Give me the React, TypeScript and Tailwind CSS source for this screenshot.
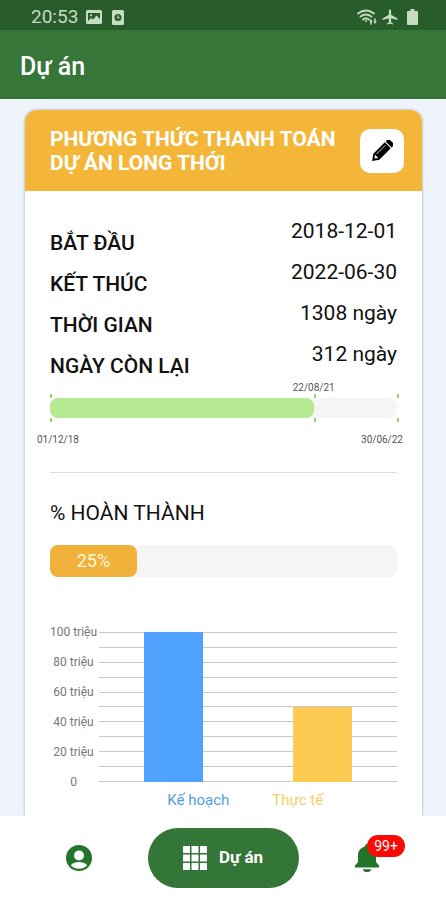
import React from "react";
import { MdAirplanemodeActive } from "react-icons/md";

const details = [
  { label: "BẮT ĐẦU", value: "2018-12-01" },
  { label: "KẾT THÚC", value: "2022-06-30" },
  { label: "THỜI GIAN", value: "1308 ngày" },
  { label: "NGÀY CÒN LẠI", value: "312 ngày" },
];

const axisLabels = [
  "100 triệu",
  "80 triệu",
  "60 triệu",
  "40 triệu",
  "20 triệu",
  "0",
];

const bars = [
  { name: "Kế hoạch", value: 100, color: "bg-[#50a2ff]" },
  { name: "Thực tế", value: 50, color: "bg-[#fdca52]" },
];

const GRID_LINES = 11;

function StatusBar() {
  return (
    <div className="flex h-[30px] items-center bg-[#285c2a] pt-1 pr-7 pl-[31px] text-[#c5dcc1]">
      <span className="text-[19px] leading-6">20:53</span>

      {/* Gallery */}
      <svg viewBox="0 0 16 14" className="ml-2 h-3.5 w-4">
        <rect width="16" height="14" rx="1.5" fill="currentColor" />
        <path d="M2 3h12v8H2z" fill="#285c2a" />
        <path d="M2 11l3-3 2 1.500L10.500 5.500 14 9v2z" fill="currentColor" />
        <circle cx="5" cy="5.300" r="1.100" fill="currentColor" />
      </svg>

      {/* Clock */}
      <svg viewBox="0 0 12 15" className="ml-2.5 h-[15px] w-3">
        <rect width="12" height="15" rx="1.5" fill="currentColor" />
        <circle cx="6" cy="7.500" r="3.500" fill="#285c2a" />
        <path
          d="M6 5.500v2.300h1.500"
          fill="none"
          stroke="currentColor"
          strokeWidth="1.200"
        />
      </svg>

      <div className="ml-auto flex items-center gap-1">
        {/* Wifi with traffic arrows */}
        <svg viewBox="0 0 20 16" className="h-4 w-5">
          <g
            fill="none"
            stroke="currentColor"
            strokeWidth="1.900"
            strokeLinecap="round"
          >
            <path d="M1 4.500Q9 -1.500 17 4.500" />
            <path d="M3.500 7.600Q9 3.300 14.500 7.600" />
            <path d="M6 10.500Q9 8 12 10.500" />
          </g>
          <path
            d="M7.500 11.300h3L9 13.400zM14 10l1.800 2.400h-1v3h-1.600v-3h-1zM18 15l-1.800-2.400h1v-3h1.600v3h1z"
            fill="currentColor"
          />
        </svg>
        <MdAirplanemodeActive className="size-[18px]" />
        <svg viewBox="0 0 11 16" className="ml-1 h-4 w-[11px]">
          <path
            d="M3.500 0h4v2H10a1 1 0 0 1 1 1v12a1 1 0 0 1-1 1H1a1 1 0 0 1-1-1V3a1 1 0 0 1 1-1h2.500z"
            fill="currentColor"
          />
        </svg>
      </div>
    </div>
  );
}

function PencilIcon() {
  return (
    <svg viewBox="0 0 22 22" className="size-[22px]">
      <g transform="rotate(-45 11 11)">
        <path
          d="M20.300 6.800h2.500a1.600 1.600 0 0 1 1.600 1.600v5.200a1.600 1.600 0 0 1-1.600 1.600h-2.500z"
          fill="currentColor"
        />
        <path d="M-3 11L3 6.800h16.200v8.400H3z" fill="currentColor" />
        <path d="M5 9.300h12.500" stroke="white" strokeWidth="0.800" />
        <path d="M.3 11l3.100-2.200v4.400z" fill="white" />
      </g>
    </svg>
  );
}

function TimelineTick({ className }: { className: string }) {
  return (
    <div
      className={`absolute -top-1 flex h-7 w-0.5 flex-col justify-between ${className}`}
    >
      <span className="h-1 rounded-full bg-[#86cf5a]" />
      <span className="h-1 rounded-full bg-[#86cf5a]" />
    </div>
  );
}

function Timeline() {
  return (
    <div className="text-[10px] leading-3 text-[#555]">
      <div className="ml-[76%]">
        <span className="inline-block -translate-x-1/2">22/08/21</span>
      </div>
      <div className="relative mt-1 h-5 rounded-lg bg-[#f5f5f5]">
        <div className="h-full w-[76%] rounded-lg bg-[#b5ea93]" />
        <TimelineTick className="left-0" />
        <TimelineTick className="left-[76%]" />
        <TimelineTick className="-right-0.5" />
      </div>
      <div className="-mr-1.5 -ml-[13px] mt-4 flex justify-between">
        <span>01/12/18</span>
        <span>30/06/22</span>
      </div>
    </div>
  );
}

function Chart() {
  return (
    <div className="grid grid-cols-[49px_1fr]">
      <div className="-my-2 -ml-0.5 flex flex-col justify-between text-center text-xs text-[#777]">
        {axisLabels.map((label) => (
          <span key={label} className="whitespace-nowrap">
            {label}
          </span>
        ))}
      </div>

      <div className="grid h-[150px]">
        <div className="col-start-1 row-start-1 flex flex-col justify-between">
          {Array.from({ length: GRID_LINES }, (_, i) => (
            <span key={i} className="h-px bg-[#c8c8c8]" />
          ))}
        </div>
        <div className="col-start-1 row-start-1 flex items-end justify-around">
          {bars.map((bar) => (
            <div
              key={bar.name}
              className={`w-1/5 ${bar.color}`}
              style={{ height: `${bar.value}%` }}
            />
          ))}
        </div>
      </div>

      <div className="col-start-2 mt-2 grid grid-cols-6 text-center text-[15px] leading-5">
        <span className="col-span-2 col-start-2 text-[#4f9fe0]">
          {bars[0].name}
        </span>
        <span className="col-span-2 text-[#f3cf62]">{bars[1].name}</span>
      </div>
    </div>
  );
}

function BottomNav() {
  return (
    <nav className="sticky bottom-0 grid h-[84px] grid-cols-3 items-center justify-items-center bg-white px-[7px]">
      <button type="button" aria-label="Tài khoản">
        <svg viewBox="0 0 26 26" className="size-[26px]">
          <circle cx="13" cy="13" r="13" fill="#23752b" />
          <circle cx="13" cy="10.500" r="5" fill="white" />
          <path
            d="M4.800 20.300C6.500 17.700 10 16.900 13 16.900s6.500.8 8.200 3.400C19 22.700 16.200 23.800 13 23.800s-6-1.100-8.200-3.500z"
            fill="white"
          />
        </svg>
      </button>

      <button
        type="button"
        className="flex h-[60px] w-[151px] items-center justify-center gap-3 rounded-full bg-[#347638] text-[17px] font-bold text-white"
      >
        <svg viewBox="0 0 24 24" className="size-6" fill="currentColor">
          {[0, 8.5, 17].map((y) =>
            [0, 8.5, 17].map((x) => (
              <rect key={`${x}-${y}`} x={x} y={y} width="7" height="7" rx="0.500" />
            ))
          )}
        </svg>
        Dự án
      </button>

      <button type="button" aria-label="Thông báo" className="relative">
        <svg viewBox="0 0 24 28" className="h-7 w-6" fill="#23752b">
          <path d="M12 0a2 2 0 0 0-2 2v.6C6 3.500 3 7 3 11v7L0 21.500V23.500h24v-2L21 18V11c0-4-3-7.500-7-8.400V2a2 2 0 0 0-2-2z" />
          <path d="M8 25.200h8a4 2.800 0 0 1-8 0z" />
        </svg>
        <span className="absolute -top-[9px] left-3 flex h-[22px] w-[38px] items-center justify-center rounded-full bg-[#fb0a05] text-sm text-white">
          99+
        </span>
      </button>
    </nav>
  );
}

export default function App() {
  return (
    <div className="flex min-h-screen flex-col bg-[#eff3fb] font-[Roboto,sans-serif] text-[#111]">
      <StatusBar />

      <header className="flex h-[69px] items-center bg-[#367639] px-5 pt-1 text-white">
        <h1 className="text-[25px] font-medium">Dự án</h1>
      </header>

      <main className="flex grow flex-col pt-[11px] pr-6 pl-[25px]">
        <article className="grow rounded-t-xl bg-white shadow-[0_0_3px_rgba(0,0,0,0.35)]">
          <div className="flex h-[81px] items-center justify-between rounded-t-xl bg-[#f4b639] pr-[18px] pl-[25px]">
            <h2 className="text-[21px] leading-6 font-bold text-white">
              PHƯƠNG THỨC THANH TOÁN
              <br />
              DỰ ÁN LONG THỚI
            </h2>
            <button
              type="button"
              aria-label="Chỉnh sửa"
              className="flex size-11 shrink-0 items-center justify-center rounded-[10px] bg-white text-black"
            >
              <PencilIcon />
            </button>
          </div>

          <div className="px-[25px] pt-7">
            <dl className="flex flex-col gap-[5px]">
              {details.map((item) => (
                <div
                  key={item.label}
                  className="flex h-9 justify-between text-[21px] leading-6"
                >
                  <dt className="self-end font-medium">{item.label}</dt>
                  <dd>{item.value}</dd>
                </div>
              ))}
            </dl>

            <div className="mt-1">
              <Timeline />
            </div>

            <hr className="mt-[26px] border-[#dcdcdc]" />

            <h3 className="mt-7 text-[21px] leading-6">% HOÀN THÀNH</h3>
            <div className="mt-5 h-8 rounded-lg bg-[#f5f5f5]">
              <div className="flex h-full w-1/4 items-center justify-center rounded-lg bg-[#f0b23a] text-lg text-[#fff8dc]">
                25%
              </div>
            </div>

            <div className="mt-[55px]">
              <Chart />
            </div>
          </div>
        </article>
      </main>

      <BottomNav />
    </div>
  );
}
